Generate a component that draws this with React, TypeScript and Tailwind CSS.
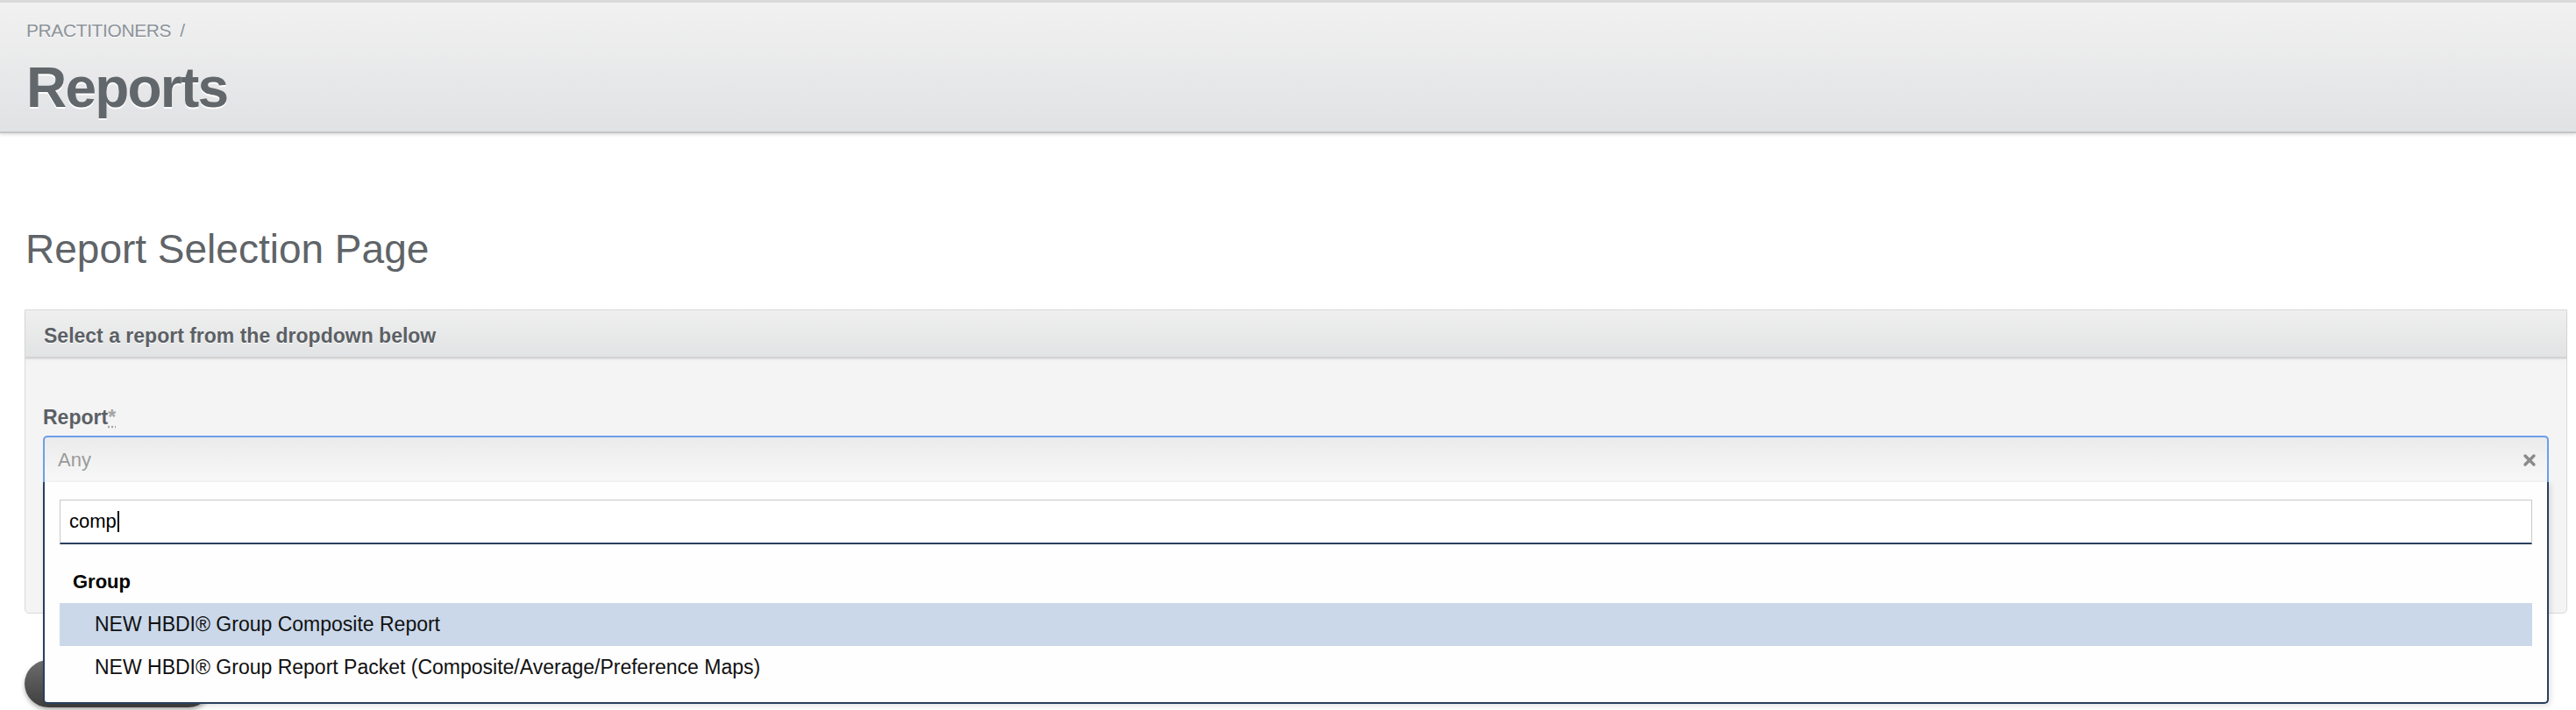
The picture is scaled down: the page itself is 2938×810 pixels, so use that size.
import React from "react";

const options = [
  { label: "NEW HBDI® Group Composite Report", active: true },
  { label: "NEW HBDI® Group Report Packet (Composite/Average/Preference Maps)", active: false },
];

function ClearIcon() {
  return (
    <svg width="16" height="16" viewBox="0 0 16 16" className="block">
      <path d="M3 3 L13 13 M13 3 L3 13" stroke="#8a8a8a" strokeWidth="3.4" strokeLinecap="round" />
    </svg>
  );
}

export default function App() {
  return (
    <div className="min-h-[810px] w-[2938px] overflow-hidden bg-white font-['Liberation_Sans',Arial,sans-serif]">
      {/* Page header */}
      <div className="h-[3px] bg-[#d9d9d9]" />
      <header className="h-[149px] border-b-2 border-[#c5c5c5] bg-gradient-to-b from-[#f1f1f1] to-[#e1e2e4] px-[30px] pt-[21px] shadow-[0_2px_3px_rgba(0,0,0,0.12)]">
        <div className="flex items-center gap-[10px] text-[21px] leading-none tracking-[-0.4px] text-[#8c9399] [text-shadow:0_1px_0_#fff]">
          <span>PRACTITIONERS</span>
          <span>/</span>
        </div>
        <h1 className="mt-[23px] text-[64px] font-bold leading-none tracking-[-1.8px] text-[#62676b] [text-shadow:0_2px_0_#fff]">
          Reports
        </h1>
      </header>

      {/* Title */}
      <h2 className="ml-[29px] mt-[109px] text-[46px] leading-none text-[#5f6468]">
        Report Selection Page
      </h2>

      {/* Panel */}
      <section className="ml-[28px] mr-[10px] mt-[46px] rounded-b-[5px] border border-[#dadada] bg-[#f4f4f4]">
        <div className="flex h-[55px] items-center border-b-2 border-[#d2d2d2] bg-gradient-to-b from-[#efefef] to-[#e2e3e4] pl-[21px] pt-[5px] shadow-[0_1px_2px_rgba(0,0,0,0.08)]">
          <span className="text-[23px] font-bold leading-none text-[#5b6065] [text-shadow:0_1px_0_#fff]">
            Select a report from the dropdown below
          </span>
        </div>

        <div className="px-[20px] pb-[149px] pt-[56px]">
          <label className="block text-[23px] font-bold leading-none text-[#5b6065]">
            Report
            <abbr className="text-[#a3a3a3] no-underline [text-decoration:underline_dotted]" title="required">
              *
            </abbr>
          </label>

          {/* Select with open dropdown */}
          <div className="relative mt-[9px]">
            <div className="flex h-[53px] items-center justify-between rounded-t-[5px] border-2 border-b-0 border-[#6d9eeb] bg-gradient-to-b from-[#ebebeb] to-[#f8f8f8] pl-[15px] pr-[12px]">
              <span className="text-[22px] leading-none text-[#9a9a9a]">Any</span>
              <ClearIcon />
            </div>

            <div className="absolute left-0 right-0 top-full z-10 rounded-b-[5px] border-2 border-t-0 border-[#2a3f5e] bg-[#fefefe] px-[17px] pb-[15px] pt-[20px] shadow-[2px_2px_6px_rgba(0,0,0,0.12)]">
              <div className="flex h-[51px] items-center border border-b-2 border-[#c9c9c9] border-b-[#2a3f5e] bg-white pl-[10px]">
                <span className="text-[22px] leading-none text-black">comp</span>
                <span className="ml-[1px] h-[24px] w-[2px] bg-black" />
              </div>

              <div className="pl-[15px] pt-[32px] text-[22px] font-bold leading-none text-black">Group</div>

              <ul className="mt-[13px]">
                {options.map((opt) => (
                  <li
                    key={opt.label}
                    className={`flex h-[49px] items-center pl-[40px] text-[23px] leading-none text-[#111] ${
                      opt.active ? "bg-[#cad8e9]" : ""
                    }`}
                  >
                    {opt.label}
                  </li>
                ))}
              </ul>
            </div>
          </div>
        </div>
      </section>

      {/* Submit button, mostly hidden behind the open dropdown */}
      <div className="ml-[28px] mt-[53px]">
        <button
          aria-label="Run report"
          className="block h-[54px] w-[214px] rounded-[27px] bg-gradient-to-b from-[#6d6d6d] to-[#3f3f3f] shadow-[0_3px_5px_rgba(0,0,0,0.3)]"
        />
      </div>
    </div>
  );
}
